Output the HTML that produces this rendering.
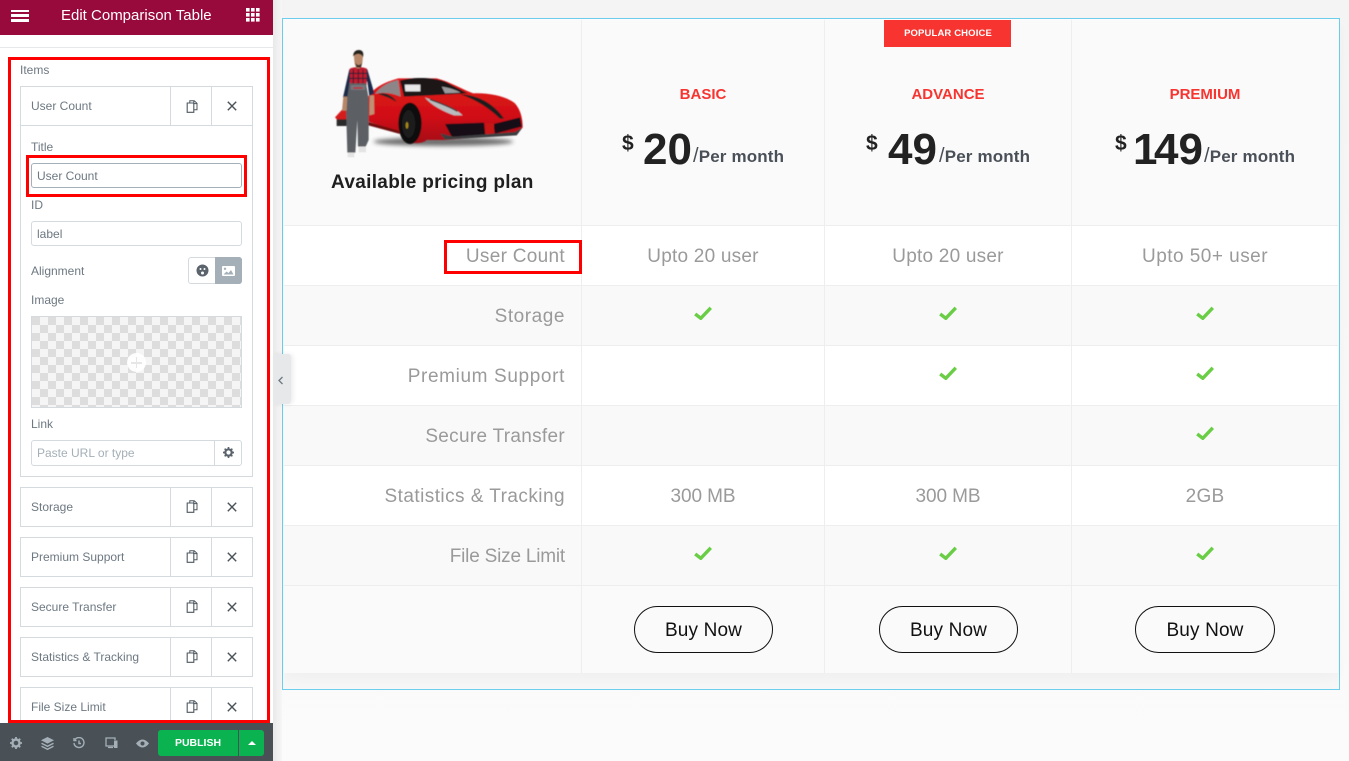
<!DOCTYPE html>
<html><head><meta charset="utf-8">
<style>
*{box-sizing:border-box}
html,body{margin:0;padding:0;width:1349px;height:761px;overflow:hidden;background:linear-gradient(#f4f4f4,#f9f9f9 60%,#fbfbfb);font-family:"Liberation Sans",sans-serif}
.a{position:absolute}
.t{position:absolute;white-space:nowrap;line-height:1}
.s{color:#6d7882;font-size:12px}
.lab{right:784px;color:#9a9a9a;font-size:19px;letter-spacing:.3px}
.val{color:#9a9a9a;font-size:19px;letter-spacing:.22px;transform:translateX(-50%)}
.head{color:#f83430;font-size:15px;font-weight:bold;letter-spacing:0;transform:translateX(-50%)}
.price{color:#222;font-size:44px;font-weight:bold}
.dol{color:#222;font-size:21px;font-weight:bold}
.per{color:#4a5058;font-size:17px;font-weight:bold;letter-spacing:.15px}
.per i{font-style:normal;font-weight:normal;font-size:20px;line-height:17px}
.btn{position:absolute;width:139px;height:47px;border:1px solid #111;border-radius:24px;text-align:center;font-size:19px;line-height:47px;color:#111;letter-spacing:.15px;background:#fafafa}
.item{position:absolute;left:20px;width:233px;height:40px;border:1px solid #d5dadf;background:#fff}
.item .n{position:absolute;left:10px;top:13px;font-size:12px;line-height:13px;color:#6d7882;white-space:nowrap}
.item .d1{position:absolute;left:149px;top:0;bottom:0;width:1px;background:#d5dadf}
.item .d2{position:absolute;left:190px;top:0;bottom:0;width:1px;background:#d5dadf}
.item svg{position:absolute}
.inp{position:absolute;left:31px;width:211px;height:25px;border:1px solid #d5dadf;border-radius:3px;background:#fff;font-size:12px;line-height:25px;padding-left:5px;color:#6d7882}
.red{position:absolute;border:3px solid #f00}
</style></head><body>

<svg width="0" height="0" style="position:absolute"><defs>
<symbol id="cp" viewBox="0 0 12 13"><path d="M3.800 2.800V.700H8.200L11 3.300V9.800H8.200M7.800.900V3.600H10.800" fill="none" stroke="#4f5860" stroke-width="1"/><path d="M1.200 3H7.800V12.300H1.200Z" fill="none" stroke="#4f5860" stroke-width="1.100"/></symbol>
<symbol id="xx" viewBox="0 0 10 10"><path d="M.8.800 9.200 9.200M9.200.800.800 9.200" fill="none" stroke="#4a5259" stroke-width="1.400"/></symbol>
<symbol id="ck" viewBox="0 0 18 14"><path d="M1.200 8 6.800 12.300 16.800 1.800" fill="none" stroke="#69ce45" stroke-width="3.400"/></symbol>
</defs></svg>

<!-- TABLE -->
<div class="a" style="left:282px;top:18px;width:1058px;height:672px;border:1px solid #6ccfee;background:linear-gradient(#fdfdfd,#f7f7f7)"></div>
<div class="a" style="left:284px;top:20px;width:1054px;height:653px;background:#fff;box-shadow:0 6px 14px rgba(0,0,0,.035)"></div>
<div class="a" style="left:284px;top:20px;width:1054px;height:205px;background:#fafafa"></div>
<div class="a" style="left:284px;top:286px;width:1054px;height:59px;background:#f9f9f9"></div>
<div class="a" style="left:284px;top:406px;width:1054px;height:59px;background:#f9f9f9"></div>
<div class="a" style="left:284px;top:526px;width:1054px;height:59px;background:#f9f9f9"></div>
<div class="a" style="left:284px;top:586px;width:1054px;height:87px;background:#fafafa"></div>

<div class="a" style="left:284px;top:225px;width:1054px;height:1px;background:#eee"></div>
<div class="a" style="left:284px;top:285px;width:1054px;height:1px;background:#eee"></div>
<div class="a" style="left:284px;top:345px;width:1054px;height:1px;background:#eee"></div>
<div class="a" style="left:284px;top:405px;width:1054px;height:1px;background:#eee"></div>
<div class="a" style="left:284px;top:465px;width:1054px;height:1px;background:#eee"></div>
<div class="a" style="left:284px;top:525px;width:1054px;height:1px;background:#eee"></div>
<div class="a" style="left:284px;top:585px;width:1054px;height:1px;background:#eee"></div>
<div class="a" style="left:581px;top:20px;width:1px;height:653px;background:#eee"></div>
<div class="a" style="left:824px;top:20px;width:1px;height:653px;background:#eee"></div>
<div class="a" style="left:1071px;top:20px;width:1px;height:653px;background:#eee"></div>

<!-- car + man illustration -->
<svg class="a" style="left:330px;top:40px" width="200" height="125" viewBox="0 0 600 375">
<defs>
<filter id="b" x="-20%" y="-80%" width="140%" height="260%"><feGaussianBlur stdDeviation="6"/></filter>
<filter id="sb"><feGaussianBlur stdDeviation="1.200"/></filter>
<linearGradient id="rd" x1="0" y1="0" x2="0" y2="1"><stop offset="0" stop-color="#e0161b"/><stop offset=".6" stop-color="#d01015"/><stop offset="1" stop-color="#a50d12"/></linearGradient>
</defs>
<ellipse cx="340" cy="305" rx="210" ry="13" fill="#333" opacity=".7" filter="url(#b)"/>
<g filter="url(#sb)">
<path d="M112 175C125 150 150 130 205 115L320 115C360 125 400 150 430 160C480 158 530 170 555 190C572 210 578 235 578 262L560 282 345 300 290 300C280 310 250 312 230 305L205 275 115 245Z" fill="url(#rd)"/>
<path d="M210 122C250 110 310 112 345 125L412 160 300 166 222 170Z" fill="#1b1719"/>
<path d="M224 134H271V154H226Z" fill="#e9e9e9"/>
<path d="M335 140C355 142 378 150 392 158L345 160Z" fill="#9a9a9c"/>
<path d="M135 162C150 140 175 126 205 120L212 170C190 160 160 155 135 162Z" fill="#8d8587"/>
<path d="M145 162C165 155 190 168 200 186L178 174Z" fill="#222"/>
<path d="M392 163C440 164 492 190 522 236L510 236C480 206 440 180 392 163Z" fill="#1a1a1c"/>
<path d="M284 172C320 185 372 200 398 226L372 226C335 212 305 196 284 172Z" fill="#b9bbbe"/>
<path d="M300 178C330 190 360 200 382 214" stroke="#333" stroke-width="4" fill="none"/>
<path d="M345 252 462 248 466 288 365 290Z" fill="#151113"/>
<path d="M490 252 570 232 575 260 495 281Z" fill="#151113"/>
<path d="M466 250H492V285H466Z" fill="#c81418"/>
<path d="M330 280 345 299 560 286 578 262 555 276 370 290Z" fill="#3d3d40"/>
<path d="M112 245 205 272 210 282 115 256Z" fill="#6f0c10"/>
<ellipse cx="240" cy="250" rx="35" ry="62" fill="#0b0b0c"/>
<ellipse cx="236" cy="252" rx="20" ry="42" fill="#1a1a1c"/>
<ellipse cx="231" cy="256" rx="4" ry="10" fill="#a98a18"/>
<!-- toolbox -->
<path d="M15 232 37 208 50 212V240H22Z" fill="#d51a1e"/><rect x="20" y="238" width="30" height="20" fill="#2a2a2a"/>
<!-- man -->
<path d="M58 88C68 80 100 80 112 88L133 160 118 168 112 125H60L52 180 39 172Z" fill="#1f2c49"/>
<path d="M60 86C70 80 100 80 110 86V135H60Z" fill="#c31f2e"/>
<path d="M70 88V135M85 85V135M99 88V135M60 100H110M60 115H110" stroke="#1a1f33" stroke-width="3"/>
<path d="M58 130H108L116 175 116 300 107 320H84L82 240 76 338H52L48 200 52 170Z" fill="#5c5e64"/>
<path d="M62 135H106V150H62Z" fill="#74767c"/><rect x="70" y="142" width="28" height="4" fill="#c31f2e"/>
<path d="M40 170H52L50 212H36Z" fill="#b78768"/><path d="M119 166H132L133 222 118 226Z" fill="#c09075"/>
<path d="M72 50C72 38 80 34 88 34 98 34 100 44 98 60 96 78 90 86 85 86 78 86 73 76 72 50Z" fill="#b78768"/>
<path d="M70 50C68 36 78 30 86 30 98 30 102 38 99 52 96 44 90 42 85 42 79 42 73 44 70 50Z" fill="#26201d"/>
<path d="M75 66C80 78 92 78 97 66L93 82H80Z" fill="#3a2b25"/>
<rect x="53" y="338" width="20" height="14" fill="#e4e4e4"/><rect x="86" y="320" width="22" height="17" fill="#e4e4e4"/>
</g>
</svg>

<div class="t" style="left:331px;top:173px;color:#1f1f1f;font-size:19px;font-weight:bold;letter-spacing:.32px">Available pricing plan</div>

<div class="a" style="left:884px;top:20px;width:127px;height:27px;background:#f83430;color:#fff;font-size:9.500px;font-weight:bold;letter-spacing:.13px;text-align:center;line-height:28px;padding-left:1px">POPULAR CHOICE</div>

<div class="t head" style="left:703px;top:87px">BASIC</div>
<div class="t head" style="left:948px;top:87px">ADVANCE</div>
<div class="t head" style="left:1205px;top:87px">PREMIUM</div>

<div class="t dol" style="left:622px;top:133px">$</div>
<div class="t price" style="left:643px;top:128px">20</div>
<div class="t per" style="left:693px;top:148px"><i>/</i>Per month</div>

<div class="t dol" style="left:866px;top:133px">$</div>
<div class="t price" style="left:888px;top:128px">49</div>
<div class="t per" style="left:939px;top:148px"><i>/</i>Per month</div>

<div class="t dol" style="left:1115px;top:133px">$</div>
<div class="t price" style="left:1133px;top:128px"><span style="letter-spacing:-3.500px">1</span>49</div>
<div class="t per" style="left:1204px;top:148px"><i>/</i>Per month</div>

<div class="t lab" style="top:247px">User Count</div>
<div class="t lab" style="top:307px;letter-spacing:.55px">Storage</div>
<div class="t lab" style="top:367px;letter-spacing:.63px">Premium Support</div>
<div class="t lab" style="top:427px">Secure Transfer</div>
<div class="t lab" style="top:487px;letter-spacing:.45px">Statistics &amp; Tracking</div>
<div class="t lab" style="top:547px;letter-spacing:-.2px">File Size Limit</div>

<div class="t val" style="left:703px;top:247px">Upto 20 user</div>
<div class="t val" style="left:948px;top:247px">Upto 20 user</div>
<div class="t val" style="left:1205px;top:247px;letter-spacing:.47px">Upto 50+ user</div>
<div class="t val" style="left:703px;top:487px;letter-spacing:-.1px">300 MB</div>
<div class="t val" style="left:948px;top:487px;letter-spacing:-.1px">300 MB</div>
<div class="t val" style="left:1205px;top:487px">2GB</div>

<svg class="a" style="left:694px;top:306px" width="18" height="14"><use href="#ck"/></svg>
<svg class="a" style="left:939px;top:306px" width="18" height="14"><use href="#ck"/></svg>
<svg class="a" style="left:1196px;top:306px" width="18" height="14"><use href="#ck"/></svg>
<svg class="a" style="left:939px;top:366px" width="18" height="14"><use href="#ck"/></svg>
<svg class="a" style="left:1196px;top:366px" width="18" height="14"><use href="#ck"/></svg>
<svg class="a" style="left:1196px;top:426px" width="18" height="14"><use href="#ck"/></svg>
<svg class="a" style="left:694px;top:546px" width="18" height="14"><use href="#ck"/></svg>
<svg class="a" style="left:939px;top:546px" width="18" height="14"><use href="#ck"/></svg>
<svg class="a" style="left:1196px;top:546px" width="18" height="14"><use href="#ck"/></svg>

<div class="btn" style="left:634px;top:606px">Buy Now</div>
<div class="btn" style="left:879px;top:606px">Buy Now</div>
<div class="btn" style="left:1135px;top:606px;width:140px">Buy Now</div>

<div class="red" style="left:444px;top:240px;width:138px;height:34px"></div>

<!-- PANEL -->
<div class="a" style="left:273px;top:0;width:9px;height:761px;background:linear-gradient(90deg,#e9e9e9,#f6f6f6)"></div>
<div class="a" style="left:0;top:0;width:273px;height:761px;background:#fff"></div>
<div class="a" style="left:0;top:0;width:273px;height:35px;background:#990a3c"></div>
<div class="a" style="left:0;top:47px;width:273px;height:1px;background:#e6e9ec"></div>
<div class="a" style="left:11px;top:9.500px;width:18px;height:2.500px;background:#fff"></div>
<div class="a" style="left:11px;top:14px;width:18px;height:2.500px;background:#fff"></div>
<div class="a" style="left:11px;top:19px;width:18px;height:2.500px;background:#fff"></div>
<div class="t" style="left:61px;top:8px;color:#fff;font-size:15px;line-height:16px">Edit Comparison Table</div>
<svg class="a" style="left:246px;top:8px" width="14" height="14" fill="#fff"><rect x="0" y="0" width="3.600" height="3.600"/><rect x="5" y="0" width="3.600" height="3.600"/><rect x="10" y="0" width="3.600" height="3.600"/><rect x="0" y="5" width="3.600" height="3.600"/><rect x="5" y="5" width="3.600" height="3.600"/><rect x="10" y="5" width="3.600" height="3.600"/><rect x="0" y="10" width="3.600" height="3.600"/><rect x="5" y="10" width="3.600" height="3.600"/><rect x="10" y="10" width="3.600" height="3.600"/></svg>

<div class="t s" style="left:20px;top:64px">Items</div>

<div class="a" style="left:20px;top:86px;width:233px;height:391px;border:1px solid #d5dadf"></div>
<div class="a" style="left:20px;top:125px;width:233px;height:1px;background:#d5dadf"></div>
<div class="a" style="left:170px;top:86px;width:1px;height:40px;background:#d5dadf"></div>
<div class="a" style="left:211px;top:86px;width:1px;height:40px;background:#d5dadf"></div>
<div class="t s" style="left:31px;top:100px">User Count</div>
<svg class="a" style="left:186px;top:100px" width="12" height="13"><use href="#cp"/></svg>
<svg class="a" style="left:227px;top:101px" width="10" height="10"><use href="#xx"/></svg>

<div class="t s" style="left:31px;top:141px">Title</div>
<div class="inp" style="top:163px;border-color:#a4afb7">User Count</div>
<div class="t s" style="left:31px;top:199px">ID</div>
<div class="inp" style="top:221px">label</div>
<div class="t s" style="left:31px;top:265px">Alignment</div>
<div class="a" style="left:188px;top:257px;width:54px;height:27px;border:1px solid #d5dadf;border-radius:3px;background:#fff"></div>
<div class="a" style="left:215px;top:257px;width:27px;height:27px;border-radius:0 3px 3px 0;background:#a4afb7"></div>
<svg class="a" style="left:196px;top:264px" width="13" height="13"><circle cx="6.500" cy="6.500" r="6" fill="#5b646c"/><circle cx="4.500" cy="5" r="1" fill="#fff"/><circle cx="8.500" cy="5" r="1" fill="#fff"/><circle cx="6.500" cy="9" r="1.500" fill="#fff"/></svg>
<svg class="a" style="left:222px;top:266px" width="13" height="10"><rect width="13" height="10" rx="1" fill="#fff"/><circle cx="3" cy="2.800" r="1.200" fill="#a4afb7"/><path d="M1.500 8.500 4.500 5.500 6.500 7 9 4 11.500 8.500Z" fill="#a4afb7"/></svg>
<div class="t s" style="left:31px;top:294px">Image</div>
<div class="a" style="left:31px;top:316px;width:211px;height:92px;border:1px solid #d5dadf;background:repeating-conic-gradient(#ddd 0 25%,#f5f5f5 0 50%) 8px 0/16px 16px"></div>
<div class="a" style="left:127px;top:353px;width:19px;height:19px;border-radius:50%;background:#fff;opacity:.92"></div>
<div class="a" style="left:131px;top:362px;width:11px;height:1.500px;background:#e6e6e6"></div>
<div class="a" style="left:135.700px;top:357px;width:1.500px;height:11px;background:#e6e6e6"></div>
<div class="t s" style="left:31px;top:418px">Link</div>
<div class="inp" style="top:440px;color:#a4afb7;height:26px;line-height:25px">Paste URL or type</div>
<div class="a" style="left:214px;top:440px;width:1px;height:26px;background:#d5dadf"></div>
<svg class="a" style="left:223px;top:447px" width="11" height="11" viewBox="0 0 12 12"><circle cx="6" cy="6" r="3.500" fill="none" stroke="#5b646c" stroke-width="2.400"/><path d="M6 0V2M6 10V12M0 6H2M10 6H12M1.800 1.800 3.200 3.200M8.800 8.800 10.200 10.200M1.800 10.200 3.200 8.800M8.800 3.200 10.200 1.800" stroke="#5b646c" stroke-width="1.800"/></svg>

<div class="item" style="top:487px"><div class="n">Storage</div><div class="d1"></div><div class="d2"></div><svg style="left:165px;top:12px" width="12" height="13"><use href="#cp"/></svg><svg style="left:206px;top:14px" width="10" height="10"><use href="#xx"/></svg></div>
<div class="item" style="top:537px"><div class="n">Premium Support</div><div class="d1"></div><div class="d2"></div><svg style="left:165px;top:12px" width="12" height="13"><use href="#cp"/></svg><svg style="left:206px;top:14px" width="10" height="10"><use href="#xx"/></svg></div>
<div class="item" style="top:587px"><div class="n">Secure Transfer</div><div class="d1"></div><div class="d2"></div><svg style="left:165px;top:12px" width="12" height="13"><use href="#cp"/></svg><svg style="left:206px;top:14px" width="10" height="10"><use href="#xx"/></svg></div>
<div class="item" style="top:637px"><div class="n">Statistics &amp; Tracking</div><div class="d1"></div><div class="d2"></div><svg style="left:165px;top:12px" width="12" height="13"><use href="#cp"/></svg><svg style="left:206px;top:14px" width="10" height="10"><use href="#xx"/></svg></div>
<div class="item" style="top:687px"><div class="n">File Size Limit</div><div class="d1"></div><div class="d2"></div><svg style="left:165px;top:12px" width="12" height="13"><use href="#cp"/></svg><svg style="left:206px;top:14px" width="10" height="10"><use href="#xx"/></svg></div>

<!-- red annotation panel -->
<div class="red" style="left:8px;top:57px;width:262px;height:666px"></div>
<div class="red" style="left:26px;top:155px;width:221px;height:42px"></div>

<!-- bottom bar -->
<div class="a" style="left:0;top:723px;width:273px;height:38px;background:#495157"></div>
<svg class="a" style="left:10px;top:737px" width="12" height="12" viewBox="0 0 12 12"><circle cx="6" cy="6" r="3.500" fill="none" stroke="#a4afb7" stroke-width="2.400"/><path d="M6 0V2M6 10V12M0 6H2M10 6H12M1.800 1.800 3.200 3.200M8.800 8.800 10.200 10.200M1.800 10.200 3.200 8.800M8.800 3.200 10.200 1.800" stroke="#a4afb7" stroke-width="1.800"/></svg>
<svg class="a" style="left:41px;top:737px" width="13" height="13" viewBox="0 0 13 13"><path d="M6.500 0 13 3.300 6.500 6.600 0 3.300Z" fill="#a4afb7"/><path d="M.5 6.300 6.500 9.300 12.500 6.300M.5 9.300 6.500 12.300 12.500 9.300" fill="none" stroke="#a4afb7" stroke-width="1.400"/></svg>
<svg class="a" style="left:73px;top:737px" width="12" height="12" viewBox="0 0 12 12"><path d="M2 2.500A5 5 0 1 1 1 6M1 1V3.500H3.500M6 3.500V6.500H8" fill="none" stroke="#a4afb7" stroke-width="1.400"/></svg>
<svg class="a" style="left:105px;top:737px" width="13" height="12" viewBox="0 0 13 12"><path d="M9 9H1V1H10V3M3 10.500H8" fill="none" stroke="#a4afb7" stroke-width="1.300"/><rect x="9" y="3.500" width="3.500" height="7.500" fill="#a4afb7"/></svg>
<svg class="a" style="left:136px;top:739px" width="13" height="9" viewBox="0 0 13 9"><path d="M0 4.500Q6.500-3.500 13 4.500 6.500 12.500 0 4.500Z" fill="#a4afb7"/><circle cx="6.500" cy="4.500" r="2" fill="#495157"/></svg>
<div class="a" style="left:158px;top:730px;width:80px;height:26px;background:#0ab350;border-radius:3px 0 0 3px;color:#fff;font-size:10.500px;font-weight:bold;text-align:center;line-height:26px">PUBLISH</div>
<div class="a" style="left:239px;top:730px;width:25px;height:26px;background:#0ab350;border-radius:0 3px 3px 0"></div>
<div class="a" style="left:248px;top:741px;width:0;height:0;border-left:4px solid transparent;border-right:4px solid transparent;border-bottom:4px solid #fff"></div>

<!-- collapse tab -->
<div class="a" style="left:273px;top:354px;width:18px;height:50px;background:#e6e8ea;border-radius:0 3px 3px 0;box-shadow:2px 0 5px rgba(0,0,0,.08)"></div>
<svg class="a" style="left:278px;top:376px" width="6" height="9"><path d="M4.500 1 1 4.500 4.500 8" fill="none" stroke="#6d7882" stroke-width="1.300"/></svg>

</body></html>
